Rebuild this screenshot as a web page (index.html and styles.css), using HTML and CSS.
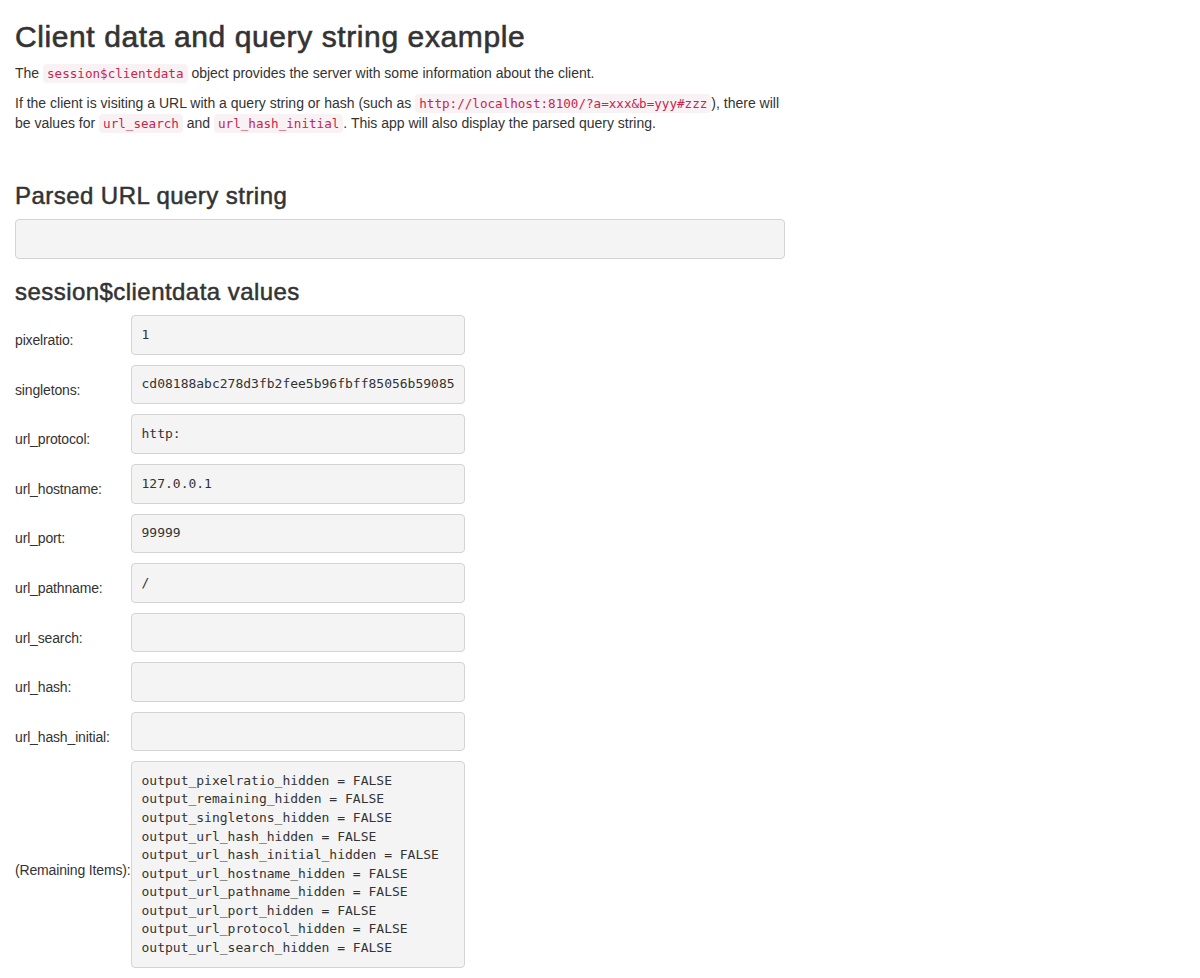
FILE: index.html
```html
<!DOCTYPE html>
<html lang="en">
<head>
<meta charset="utf-8">
<title>Client data and query string example</title>
<link rel="stylesheet" href="styles.css">
</head>
<body>
<div class="container-fluid">
  <div class="row">
    <div class="col">
      <h2 class="title">Client data and query string example</h2>
      <p>The <code>session$clientdata</code> object provides the server with some information about the client.</p>
      <p>If the client is visiting a URL with a query string or hash (such as <code>http://localhost:8100/?a=xxx&amp;b=yyy#zzz</code>), there will be values for <code>url_search</code> and <code>url_hash_initial</code>. This app will also display the parsed query string.</p>

      <h3 class="section-first">Parsed URL query string</h3>
      <pre class="output"></pre>

      <h3>session$clientdata values</h3>
      <table class="values">
        <tbody>
          <tr><td class="label">pixelratio:</td><td><pre class="output">1</pre></td></tr>
          <tr><td class="label">singletons:</td><td><pre class="output">cd08188abc278d3fb2fee5b96fbff85056b59085</pre></td></tr>
          <tr><td class="label">url_protocol:</td><td><pre class="output">http:</pre></td></tr>
          <tr><td class="label">url_hostname:</td><td><pre class="output">127.0.0.1</pre></td></tr>
          <tr><td class="label">url_port:</td><td><pre class="output">99999</pre></td></tr>
          <tr><td class="label">url_pathname:</td><td><pre class="output">/</pre></td></tr>
          <tr><td class="label">url_search:</td><td><pre class="output"></pre></td></tr>
          <tr><td class="label">url_hash:</td><td><pre class="output"></pre></td></tr>
          <tr><td class="label">url_hash_initial:</td><td><pre class="output"></pre></td></tr>
          <tr><td class="label">(Remaining Items):</td><td><pre class="output">output_pixelratio_hidden = FALSE
output_remaining_hidden = FALSE
output_singletons_hidden = FALSE
output_url_hash_hidden = FALSE
output_url_hash_initial_hidden = FALSE
output_url_hostname_hidden = FALSE
output_url_pathname_hidden = FALSE
output_url_port_hidden = FALSE
output_url_protocol_hidden = FALSE
output_url_search_hidden = FALSE</pre></td></tr>
        </tbody>
      </table>
    </div>
  </div>
</div>
</body>
</html>
```

FILE: styles.css
```css
html, body {
  margin: 0;
  padding: 0;
  background: #ffffff;
}

body {
  font-family: "Liberation Sans", Arial, Helvetica, sans-serif;
  font-size: 14px;
  line-height: 1.42857143;
  color: #333333;
}

.container-fluid {
  padding: 0 15px;
}

.row {
  margin: 0 -15px;
  display: flex;
}

.col {
  width: 66.6667%;
  padding: 0 15px;
  box-sizing: border-box;
}

h2, h3 {
  font-family: "Liberation Sans", Arial, Helvetica, sans-serif;
  font-weight: 400;
  line-height: 1.1;
  color: #333333;
  margin: 20px 0 10px;
  -webkit-text-stroke: 0.6px #333333;
}

h2.title {
  font-size: 30px;
  letter-spacing: 0.6px;
}

h3 {
  font-size: 24px;
  letter-spacing: 0.45px;
  -webkit-text-stroke: 0.5px #333333;
}

h3.section-first {
  margin-top: 50px;
}

p {
  margin: 0 0 10px;
  letter-spacing: 0;
}

code {
  font-family: "DejaVu Sans Mono", Menlo, Monaco, Consolas, monospace;
  font-size: 90%;
  padding: 2px 4px;
  color: #c7254e;
  background-color: #f9f2f4;
  border-radius: 4px;
}

pre.output {
  display: block;
  margin: 0 0 10px;
  padding: 9.5px;
  font-family: "DejaVu Sans Mono", Menlo, Monaco, Consolas, monospace;
  font-size: 13px;
  line-height: 1.42857143;
  color: #333333;
  background-color: #f4f4f4;
  border: 1px solid #d4d4d4;
  border-radius: 4px;
  white-space: pre;
  min-height: 18.57px;
}

table.values {
  border-collapse: collapse;
  border-spacing: 0;
}

table.values td {
  padding: 0;
  vertical-align: middle;
}

table.values td.label {
  width: 116px;
  white-space: nowrap;
  letter-spacing: -0.15px;
}
```
